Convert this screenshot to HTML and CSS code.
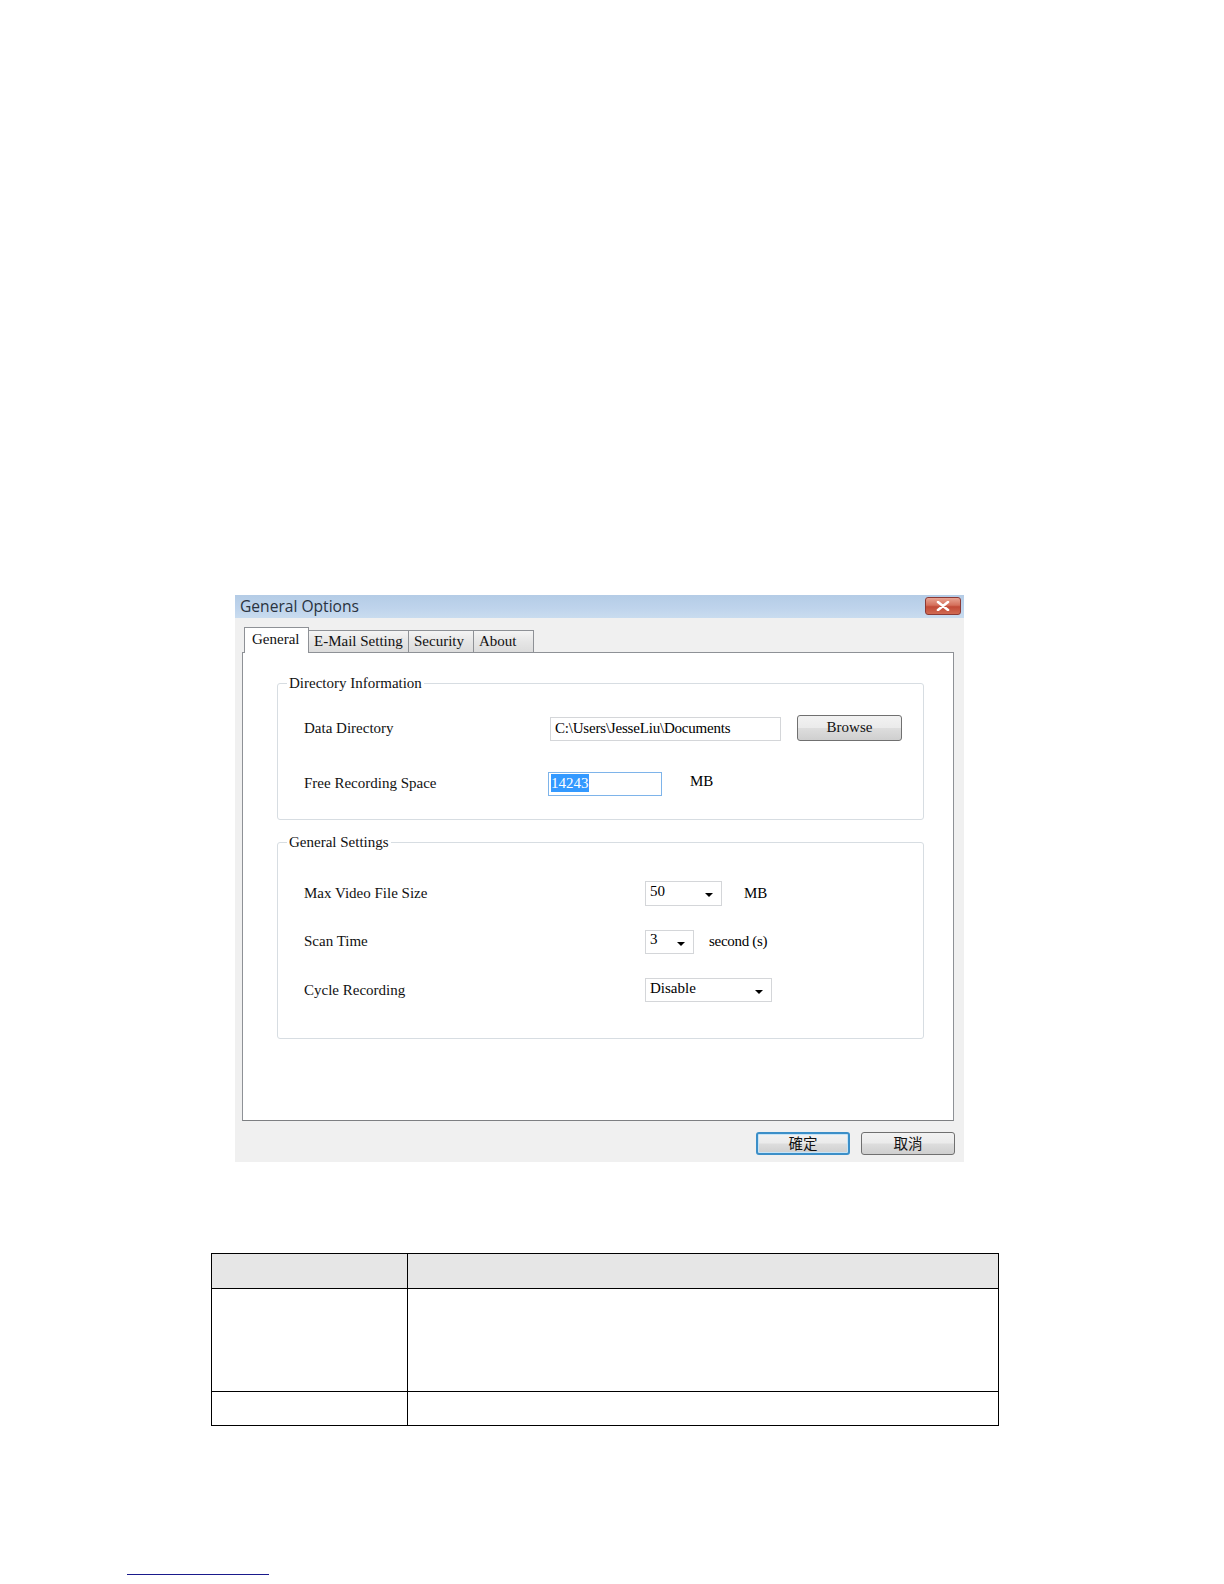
FILE: index.html
```html
<!DOCTYPE html>
<html lang="en">
<head>
    <meta charset="UTF-8">
    <title>General Options</title>
    <link rel="stylesheet" href="styles.css">
</head>
<body>
    <div class="page">
        <div class="dialog">
            <div class="titlebar">
                <span class="title-text">General Options</span>
                <div class="close-btn">
                    <svg width="14" height="10" viewBox="0 0 14 10">
                        <path d="M2 1 L12 9 M12 1 L2 9" stroke="#fff" stroke-width="2.6" stroke-linecap="round"/>
                    </svg>
                </div>
            </div>

            <div class="dialog-body">
                <div class="tabs">
                    <div class="tab active">General</div>
                    <div class="tab">E-Mail Setting</div>
                    <div class="tab">Security</div>
                    <div class="tab">About</div>
                </div>

                <div class="tab-panel">
                    <fieldset class="group">
                        <legend>Directory Information</legend>
                        <div class="row dir-row">
                            <span class="label">Data Directory</span>
                            <div class="textbox path-box">C:\Users\JesseLiu\Documents</div>
                            <div class="win-btn browse-btn">Browse</div>
                        </div>
                        <div class="row dir-row">
                            <span class="label">Free Recording Space</span>
                            <div class="textbox space-box"><span class="selected">14243</span></div>
                            <span class="unit">MB</span>
                        </div>
                    </fieldset>

                    <fieldset class="group settings">
                        <legend>General Settings</legend>
                        <div class="row set-row">
                            <span class="label wide">Max Video File Size</span>
                            <div class="combo combo-size"><span>50</span><i class="arrow"></i></div>
                            <span class="unit unit-mb">MB</span>
                        </div>
                        <div class="row set-row">
                            <span class="label wide">Scan Time</span>
                            <div class="combo combo-scan"><span>3</span><i class="arrow"></i></div>
                            <span class="unit unit-sec">second (s)</span>
                        </div>
                        <div class="row set-row">
                            <span class="label wide">Cycle Recording</span>
                            <div class="combo combo-cycle"><span>Disable</span><i class="arrow"></i></div>
                        </div>
                    </fieldset>
                </div>

                <div class="footer">
                    <div class="win-btn cjk default">確定</div>
                    <div class="win-btn cjk">取消</div>
                </div>
            </div>
        </div>

        <table class="doc-table">
            <tr class="head">
                <td class="col-a"></td>
                <td></td>
            </tr>
            <tr class="tall">
                <td></td>
                <td></td>
            </tr>
            <tr class="short">
                <td></td>
                <td></td>
            </tr>
        </table>

        <div class="footnote-rule"></div>
    </div>
</body>
</html>
```

FILE: styles.css
```css
* {
    margin: 0;
    padding: 0;
    box-sizing: border-box;
}

body {
    background: #fff;
    font-family: 'Liberation Serif', 'Times New Roman', serif;
    color: #000;
}

.page {
    padding-top: 595px;
    width: 1224px;
}

/* dialog window */

.dialog {
    margin-left: 235px;
    width: 729px;
    background: #f0f0f0;
}

.titlebar {
    height: 23px;
    background: linear-gradient(180deg, #b4cce6 0%, #bfd4ec 60%, #c9dcef 100%);
    display: flex;
    align-items: center;
    justify-content: space-between;
    padding: 0 3px 0 5px;
}

.title-text {
    font-family: 'Open Sans', 'Noto Sans', sans-serif;
    font-size: 15.6px;
    color: #2a3340;
    margin-top: -1px;
}

.close-btn {
    width: 36px;
    height: 18px;
    margin-top: -2px;
    border: 1px solid #8c3a35;
    border-radius: 3px;
    background: linear-gradient(180deg, #e8a493 0%, #d5705c 45%, #c24a37 55%, #d06a52 100%);
    display: flex;
    align-items: center;
    justify-content: center;
}

.dialog-body {
    padding: 9px 10px 7px 7px;
}

.tabs {
    display: flex;
    align-items: flex-end;
    height: 25px;
    padding-left: 2px;
    position: relative;
    z-index: 1;
}

.tab {
    height: 22px;
    padding: 0 5px;
    font-size: 15px;
    line-height: 20px;
    border: 1px solid #8e9196;
    border-left: none;
    border-bottom: none;
    background: linear-gradient(180deg, #f4f4f4 0%, #e6e6e6 50%, #dcdcdc 100%);
    color: #111;
}

.tab:nth-child(2) { width: 100px; border-left: 1px solid #8e9196; }
.tab:nth-child(3) { width: 65px; }
.tab:nth-child(4) { width: 60px; }

.tab.active {
    width: 65px;
    height: 26px;
    margin-bottom: -1px;
    background: #fff;
    border-left: 1px solid #8e9196;
    padding-left: 7px;
    line-height: 22px;
}

.tab.active + .tab {
    border-left: none;
}

.tab-panel {
    width: 712px;
    height: 469px;
    background: #fff;
    border: 1px solid #8e9196;
    border-bottom-color: #7d7f82;
    padding: 22px 0 0 34px;
}

/* group boxes */

.group {
    border: 1px solid #d7dde2;
    border-radius: 3px;
    width: 647px;
    padding: 10px 0 8px 26px;
}

.group legend {
    font-size: 15px;
    line-height: 16px;
    padding: 0 2px;
    margin-left: -17px;
    color: #111;
}

.group.settings {
    margin-top: 14px;
    padding: 19px 0 23px 26px;
}

.row {
    display: flex;
    align-items: center;
}

.dir-row {
    height: 55px;
}

.set-row {
    height: 48.5px;
}

.label {
    width: 246px;
    font-size: 15px;
    color: #111;
}

.label.wide {
    width: 341px;
}

.textbox {
    height: 24px;
    border: 1px solid #d4d6d9;
    background: #fff;
    font-size: 15px;
    line-height: 21px;
    padding-left: 4px;
}

.path-box {
    width: 231px;
    letter-spacing: -0.2px;
}

.space-box {
    width: 114px;
    margin-left: -2px;
    border-color: #7eb4ea;
    padding-left: 2px;
    padding-top: 1px;
    line-height: 18px;
}

.selected {
    background: #3399ff;
    color: #fff;
    display: inline-block;
    line-height: 18px;
}

.unit {
    font-size: 15px;
    margin-left: 28px;
    margin-top: -5px;
}

.unit-mb { margin-left: 22px; margin-top: 0; }
.unit-sec { margin-left: 15px; margin-top: 0; letter-spacing: -0.3px; }

/* buttons */

.win-btn {
    height: 26px;
    border: 1px solid #707070;
    border-radius: 3px;
    background: linear-gradient(180deg, #f2f2f2 0%, #ebebeb 48%, #dddddd 52%, #cfcfcf 100%);
    display: flex;
    align-items: center;
    justify-content: center;
    font-size: 15px;
    color: #111;
}

.browse-btn {
    width: 105px;
    margin-left: 16px;
    margin-top: -2px;
}

.footer {
    display: flex;
    justify-content: flex-end;
    gap: 11px;
    margin-top: 11px;
    margin-right: -1px;
}

.win-btn.cjk {
    width: 94px;
    height: 23px;
    font-family: 'Noto Sans CJK TC', 'Noto Sans', sans-serif;
    font-size: 14.5px;
    line-height: 1;
}

.win-btn.default {
    border: 2px solid #3c8fc8;
    box-shadow: inset 0 0 0 1px #c6e4f7;
}

/* dropdowns */

.combo {
    height: 25px;
    border: 1px solid #d4d6d9;
    background: #fff;
    display: flex;
    align-items: center;
    justify-content: space-between;
    padding: 0 8px 0 4px;
    font-size: 15px;
}

.combo span {
    margin-top: -4px;
}

.combo-size { width: 77px; }
.combo-scan { width: 49px; height: 24px; }
.combo-cycle { width: 127px; height: 24px; }

.arrow {
    width: 0;
    height: 0;
    border-left: 4px solid transparent;
    border-right: 4px solid transparent;
    border-top: 4px solid #000;
    margin-top: 4px;
}

/* document table under the screenshot */

.doc-table {
    margin: 91px 0 0 211px;
    width: 788px;
    border-collapse: collapse;
}

.doc-table td {
    border: 1px solid #000;
}

.doc-table .col-a {
    width: 196px;
}

.doc-table .head td {
    height: 35px;
    background: #e6e6e6;
}

.doc-table .tall td {
    height: 103px;
}

.doc-table .short td {
    height: 34px;
}

.footnote-rule {
    margin: 148px 0 0 127px;
    width: 142px;
    border-top: 1px solid #1a1a8c;
}
```
